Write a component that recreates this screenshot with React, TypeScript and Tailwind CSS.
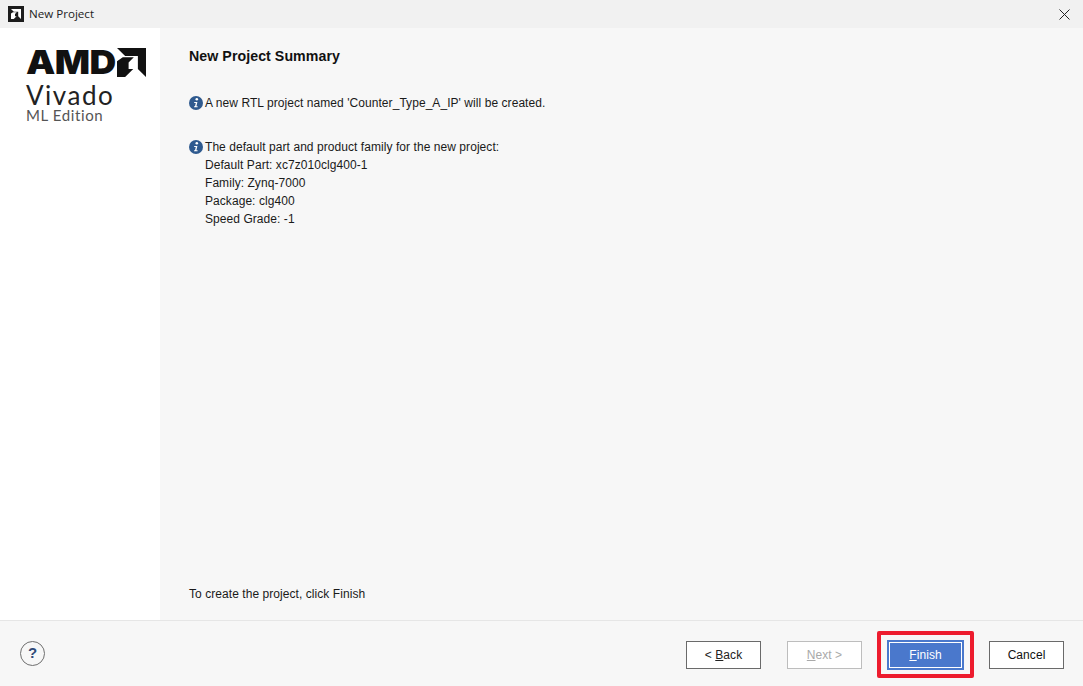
const InfoIcon = () => (
  <svg width="14" height="14" viewBox="0 0 14 14" className="shrink-0">
    <circle cx="7" cy="7" r="7" fill="#2f5a8f" />
    <circle cx="7.8" cy="3.3" r="1.3" fill="#fff" />
    <path d="M5.2 6h3.2l-1 4.3h1.2v1H5l.1-1h.9L6.8 7H5.2z" fill="#fff" />
  </svg>
);

const AmdArrow = ({ size, color }: { size: number; color: string }) => (
  <svg width={size} height={size} viewBox="0 0 100 100">
    <path d="M0 0h100v100L72 72V28H28z" fill={color} />
    <path d="M0 100V46L20 32H58L40 50V72H56L28 100z" fill={color} />
  </svg>
);

const App = () => {
  return (
    <div className="flex h-[686px] w-[1083px] flex-col overflow-hidden bg-[#f7f7f7] font-['Liberation_Sans',Arial,sans-serif] text-[12px] tracking-[0.06px] text-[#1a1a1a]">
      <div className="flex h-[28px] items-center justify-between bg-[#f1f1f1] pl-[8px] pr-[13px]">
        <div className="flex items-center gap-[5px]">
          <div className="flex h-[16px] w-[16px] items-center justify-center bg-[#1c1c1c]">
            <AmdArrow size={10} color="#fff" />
          </div>
          <span className="font-['Open_Sans',sans-serif] text-[11.6px] tracking-normal text-[#222]">New Project</span>
        </div>
        <svg width="11" height="11" viewBox="0 0 11 11">
          <path d="M.5.5l10 10M10.5.5l-10 10" stroke="#222" strokeWidth="1" fill="none" />
        </svg>
      </div>

      <div className="flex min-h-0 flex-1">
        <aside className="w-[160px] shrink-0 bg-white pl-[26px] pt-[20px]">
          <div className="flex h-[28px] items-center">
            <span className="w-[91px] origin-left scale-x-[1.12] font-['Inter',sans-serif] text-[33px] font-black leading-none tracking-[-0.5px] text-[#111]">
              AMD
            </span>
            <AmdArrow size={29} color="#111" />
          </div>
          <div className="mt-[6px] font-['Lato',sans-serif] text-[26px] leading-[26px] tracking-[1.5px] text-[#222]">
            Vivado
          </div>
          <div className="font-['Lato',sans-serif] text-[15px] leading-[15px] tracking-[0.6px] text-[#555]">
            ML Edition
          </div>
        </aside>

        <main className="flex flex-1 flex-col pl-[29px] pt-[20px]">
          <h1 className="text-[14.2px] font-bold leading-[17px] text-[#111]">New Project Summary</h1>
          <div className="mt-[29px] flex items-center gap-[2px] leading-[18px]">
            <InfoIcon />
            <span>A new RTL project named 'Counter_Type_A_IP' will be created.</span>
          </div>
          <div className="mt-[26px] flex flex-col leading-[18px]">
            <div className="flex items-center gap-[2px]">
              <InfoIcon />
              <span>The default part and product family for the new project:</span>
            </div>
            <div className="pl-[16px]">
              <div>Default Part: xc7z010clg400-1</div>
              <div>Family: Zynq-7000</div>
              <div>Package: clg400</div>
              <div>Speed Grade: -1</div>
            </div>
          </div>
          <div className="mt-auto pb-[17px] leading-[18px]">To create the project, click Finish</div>
        </main>
      </div>

      <footer className="flex h-[66px] shrink-0 items-center justify-between border-t border-[#e6e6e6] pl-[20px] pr-[19px] pb-[1px]">
        <div className="flex h-[25px] w-[25px] items-center justify-center rounded-full border border-[#6f6f6f] text-[15px] font-bold text-[#2f4a78]">
          ?
        </div>
        <div className="mt-[3px] flex items-center">
          <button className="h-[28px] w-[75px] border border-[#6a6a6a] bg-white text-[#222]">
            &lt; <span className="underline">B</span>ack
          </button>
          <button className="ml-[26px] h-[28px] w-[75px] border border-[#bdbdbd] bg-white text-[#a9a9a9]">
            <span className="underline">N</span>ext &gt;
          </button>
          <div className="relative ml-[25px]">
            <button className="flex h-[30px] w-[77px] items-center justify-center border-[2px] border-[#4a78cc] bg-[#4a78cc] text-white shadow-[inset_0_0_0_1px_#fff]">
              <span><span className="underline">F</span>inish</span>
            </button>
            <div className="absolute -inset-x-[10px] -bottom-[8px] -top-[9px] rounded-[2px] border-[4px] border-[#ed1c2e]" />
          </div>
          <button className="ml-[25px] h-[28px] w-[75px] border border-[#6a6a6a] bg-white text-[#111]">Cancel</button>
        </div>
      </footer>
    </div>
  );
};

export default App;
